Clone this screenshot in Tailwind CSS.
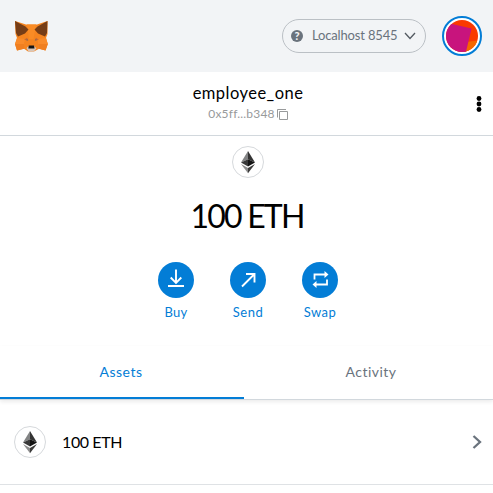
<!DOCTYPE html>
<html lang="en">
<head>
<meta charset="utf-8">
<title>Wallet</title>
<script src="https://cdn.jsdelivr.net/npm/@tailwindcss/browser@4"></script>
</head>
<body class="w-[493px] h-[493px] overflow-hidden bg-white font-['Lato','Liberation_Sans',sans-serif] text-black">
<svg class="hidden">
  <symbol id="eth" viewBox="0 0 32 32">
    <path d="M16 5 9 16.500 16 13.300Z" fill="#828384"/>
    <path d="M16 5 23 16.500 16 13.300Z" fill="#343434"/>
    <path d="M9 16.500 16 13.300V20.600Z" fill="#393939"/>
    <path d="M23 16.500 16 13.300V20.600Z" fill="#141414"/>
    <path d="M9 18 16 22V27.300Z" fill="#8c8c8c"/>
    <path d="M23 18 16 22V27.300Z" fill="#3c3c3b"/>
  </symbol>
</svg>
<header class="h-[72px] bg-[#f2f4f6] flex items-center pl-[14px] pr-[11px]">
  <svg class="w-[34px] h-[34px]" viewBox="0 0 34 34">
    <path d="M1 2 12 5.500H23L33.500 2 33.500 15 32 19 33.800 25 31.500 31.500 25 29.800 20 32.500H14L10 29.800 3 31.500 1 25 3 19 1.500 15Z" fill="#f5841f"/>
    <path d="M1 25 3 19 11 20 10 25Z M33.800 25 32 19 24 20 24 25Z" fill="#f98b2a"/>
    <path d="M1 25H10L10 29.800 3 31.500Z M33.800 25H25V29.800L31.500 31.500Z" fill="#f07f20"/>
    <path d="M13 5.500H22L19.500 20H15Z" fill="#f98b25"/>
    <path d="M1 2 11.500 7.500 14.500 10.500 11 14.500 4 17.500 2 14Z M33.500 2 23.500 7.500 20.500 10.500 24 14.500 31 17.500 33 14Z" fill="#763d16"/>
    <path d="M10 20.800 13 18.800 14.500 21.500Z M25 20.800 22 18.800 20.500 21.500Z" fill="#c66b36"/>
    <path d="M12.400 20.400H14V21.400H12.400Z M21 20.400H22.600V21.400H21Z" fill="#7e6a5c"/>
    <path d="M12.500 29.300 14 27.500H20.500L22.500 29.300 20 32.500H14.500Z" fill="#d9c6b8"/>
    <path d="M14.800 26.500H20L20.500 29.500H14.300Z" fill="#161616"/>
  </svg>
  <div class="ml-auto w-[144px] h-[34px] rounded-full border border-[#bbc0c5] flex items-center pl-2 pr-[9px]">
    <span class="size-3 rounded-full bg-[#6a737d] text-[#f2f4f6] text-[11px] leading-3 font-black text-center">?</span>
    <span class="ml-[9px] text-[13px] tracking-[-0.16px] text-[#6a737d] whitespace-nowrap">Localhost 8545</span>
    <svg class="ml-auto w-3 h-2" viewBox="0 0 12 8" fill="none" stroke="#535a61" stroke-width="1.300"><path d="M1 1 6 6.500 11 1"/></svg>
  </div>
  <svg class="ml-4 size-10" viewBox="0 0 40 40">
    <circle cx="20" cy="20" r="19" fill="#fff" stroke="#037dd6" stroke-width="2"/>
    <clipPath id="disc"><circle cx="20" cy="20" r="16"/></clipPath>
    <g clip-path="url(#disc)">
      <path d="M0 0H40V40H0Z" fill="#fa3a00"/>
      <path d="M24 26 40 24V40H20Z" fill="#f46700"/>
      <path d="M-4 5 10 8 29.500 12.500 23 40H-4Z" fill="#c8147d"/>
    </g>
  </svg>
</header>
<section class="h-16 border-b border-[#d2d8dd] grid grid-cols-[1fr_220px_1fr] items-center pl-[3px]">
  <div class="col-start-2 flex flex-col items-center">
    <div class="text-[16.500px] leading-[20px] tracking-[0.47px]">employee_one</div>
    <div class="flex items-center text-[12px] leading-[22px] text-[#989a9b]">
      <span class="tracking-[0.2px]">0x5ff...b348</span>
      <svg class="ml-[2px] mt-[2px] size-[11px]" viewBox="0 0 11 11" fill="none" stroke="#989a9b"><path d="M.5 8.500V.5H9M2.500 2.500H10.500V10.500H2.500Z"/></svg>
    </div>
  </div>
  <svg class="justify-self-end mr-[11px] w-[6px] h-4" viewBox="0 0 6 16"><circle cx="3" cy="2.500" r="2.400"/><circle cx="3" cy="8" r="2.400"/><circle cx="3" cy="13.500" r="2.400"/></svg>
</section>
<main>
  <section class="h-[210px] flex flex-col items-center pt-[10px] pl-[3px]">
    <div class="size-8 rounded-full border border-[#d6d9dc]"><svg class="size-[30px]" viewBox="1 1 30 30"><use href="#eth" width="32" height="32"/></svg></div>
    <div class="mt-[16px] h-[44px] text-[32px] leading-[44px] tracking-[-1.800px] whitespace-nowrap pr-[2px]">100 ETH</div>
    <div class="mt-[24px] flex gap-9 text-[13px] leading-[17px] text-[#037dd6]">
      <div class="w-9 flex flex-col items-center gap-[6px]">
        <svg class="size-9 shrink-0" viewBox="0 0 36 36" fill="none" stroke="#fff" stroke-width="1.900"><circle cx="18" cy="18" r="18" fill="#037dd6" stroke="none"/><path d="M18 7.500V20.500M12.700 15.500 18 20.800 23.300 15.500M10 24H26"/></svg>
        <span class="tracking-[0.2px]">Buy</span>
      </div>
      <div class="w-9 flex flex-col items-center gap-[6px]">
        <svg class="size-9 shrink-0" viewBox="0 0 36 36" fill="none" stroke="#fff" stroke-width="1.900"><circle cx="18" cy="18" r="18" fill="#037dd6" stroke="none"/><path d="M12 24.500 24.500 12M16 12H24.500V20.500"/></svg>
        <span class="tracking-[0.5px]">Send</span>
      </div>
      <div class="w-9 flex flex-col items-center gap-[6px]">
        <svg class="size-9 shrink-0" viewBox="0 0 36 36" fill="none" stroke="#fff" stroke-width="1.800"><circle cx="18" cy="18" r="18" fill="#037dd6" stroke="none"/><path d="M12.500 17.500V12.500H23.500M25 17.500V22.500H13.500"/><path d="M22.500 9 26.500 12.500 22.500 16ZM14.500 19 10.500 22.500 14.500 26Z" fill="#fff" stroke="none"/></svg>
        <span class="tracking-[0.4px]">Swap</span>
      </div>
    </div>
  </section>
  <nav class="h-[54px] flex text-[14px] border-b border-[#d2d8dd] shadow-[0_2px_4px_rgba(0,0,0,0.08)]">
    <div class="w-[244px] shrink-0 border-b-2 border-[#037dd6] text-[#037dd6] text-center leading-[20px] pt-[16px] pr-[2px] tracking-[0.500px]">Assets</div>
    <div class="flex-1 text-[#6a737d] text-center leading-[20px] pt-[16px] pl-[5px] tracking-[0.500px]">Activity</div>
  </nav>
  <div class="h-[85px] border-b border-[#dfe2e5] flex items-center pl-[14px] pr-[11px]">
    <div class="size-8 rounded-full border border-[#d6d9dc]"><svg class="size-[30px]" viewBox="1 1 30 30"><use href="#eth" width="32" height="32"/></svg></div>
    <span class="ml-4 text-[16px] tracking-[-0.4px]">100 ETH</span>
    <svg class="ml-auto w-[10px] h-[14px]" viewBox="0 0 10 14" fill="none" stroke="#6a737d" stroke-width="2.300"><path d="M1.500 1 8 7 1.500 13"/></svg>
  </div>
</main>
</body>
</html>
